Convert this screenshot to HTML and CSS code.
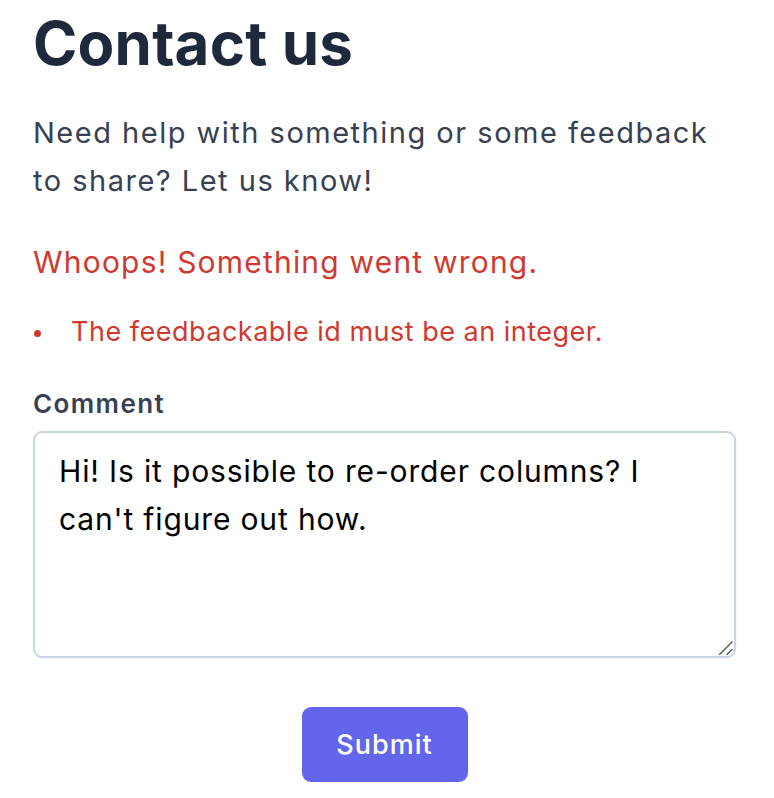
FILE: index.html
```html
<!DOCTYPE html>
<html lang="en">
<head>
<meta charset="utf-8">
<title>Contact us</title>
<link rel="stylesheet" href="styles.css">
</head>
<body>
<main class="page">
  <h1 class="title">Contact us</h1>
  <p class="intro">Need help with something or some feedback to share? Let us know!</p>
  <div class="errors">
    <p class="errors-title">Whoops! Something went wrong.</p>
    <ul class="errors-list">
      <li class="errors-item">The feedbackable id must be an integer.</li>
    </ul>
  </div>
  <form class="form">
    <label class="label" for="comment">Comment</label>
    <div class="field">
      <textarea class="textarea" id="comment">Hi! Is it possible to re-order columns? I can't figure out how.</textarea>
      <svg class="grip" width="14" height="14" viewBox="0 0 14 14" aria-hidden="true">
        <path d="M0.5 13.5 L13 1 M8 13.5 L13 8.5" stroke="#555" stroke-width="1.4" stroke-linecap="round" fill="none"/>
      </svg>
    </div>
    <div class="actions">
      <button type="button" class="btn">Submit</button>
    </div>
  </form>
</main>
</body>
</html>
```

FILE: styles.css
```css
* { box-sizing: border-box; }
html, body { margin: 0; padding: 0; background: #fff; }
body { font-family: Inter, "Noto Sans", sans-serif; }
.page { padding: 0 38px 0 33px; }
.title {
  margin: 0;
  padding-top: 9px;
  font-size: 60px;
  line-height: 68px;
  font-weight: 700;
  letter-spacing: 0.2px;
  color: #1e293b;
}
.intro {
  margin: 32px 0 0;
  font-size: 29px;
  line-height: 48px;
  letter-spacing: 1.5px;
  color: #374151;
}
.errors { margin-top: 37px; color: #d0392f; }
.errors-title { margin: 0; font-size: 30px; line-height: 40px; letter-spacing: 1.2px; }
.errors-list { margin: 30px 0 0; padding: 0; list-style: none; font-size: 27px; line-height: 40px; letter-spacing: 0.5px; }
.errors-item { display: flex; align-items: center; }
.errors-item::before {
  content: "";
  width: 7px;
  height: 7px;
  border-radius: 50%;
  background: #d0392f;
  margin: 2px 30px 0 1px;
  flex: none;
}
.form { margin-top: 36px; display: flex; flex-direction: column; }
.label { font-size: 26px; line-height: 32px; font-weight: 600; letter-spacing: 1.4px; color: #374151; }
.field { position: relative; margin-top: 11px; }
.textarea {
  display: block;
  width: 100%;
  height: 227px;
  border: 2px solid #cbd5e1;
  border-radius: 9px;
  padding: 14px 30px 14px 24px;
  font-family: Inter, "Noto Sans", sans-serif;
  font-size: 30px;
  line-height: 48px;
  letter-spacing: 0.85px;
  color: #000;
  resize: none;
  box-shadow: 0 1px 2px rgba(0,0,0,0.05);
}
.grip { position: absolute; right: 3px; bottom: 3px; }
.actions { display: flex; justify-content: center; margin-top: 49px; }
.btn {
  width: 166px;
  height: 75px;
  border: 0;
  border-radius: 9px;
  background: #6366eb;
  color: #fff;
  font-family: Inter, "Noto Sans", sans-serif;
  font-size: 27px;
  font-weight: 500;
  letter-spacing: 1px;
}
```
